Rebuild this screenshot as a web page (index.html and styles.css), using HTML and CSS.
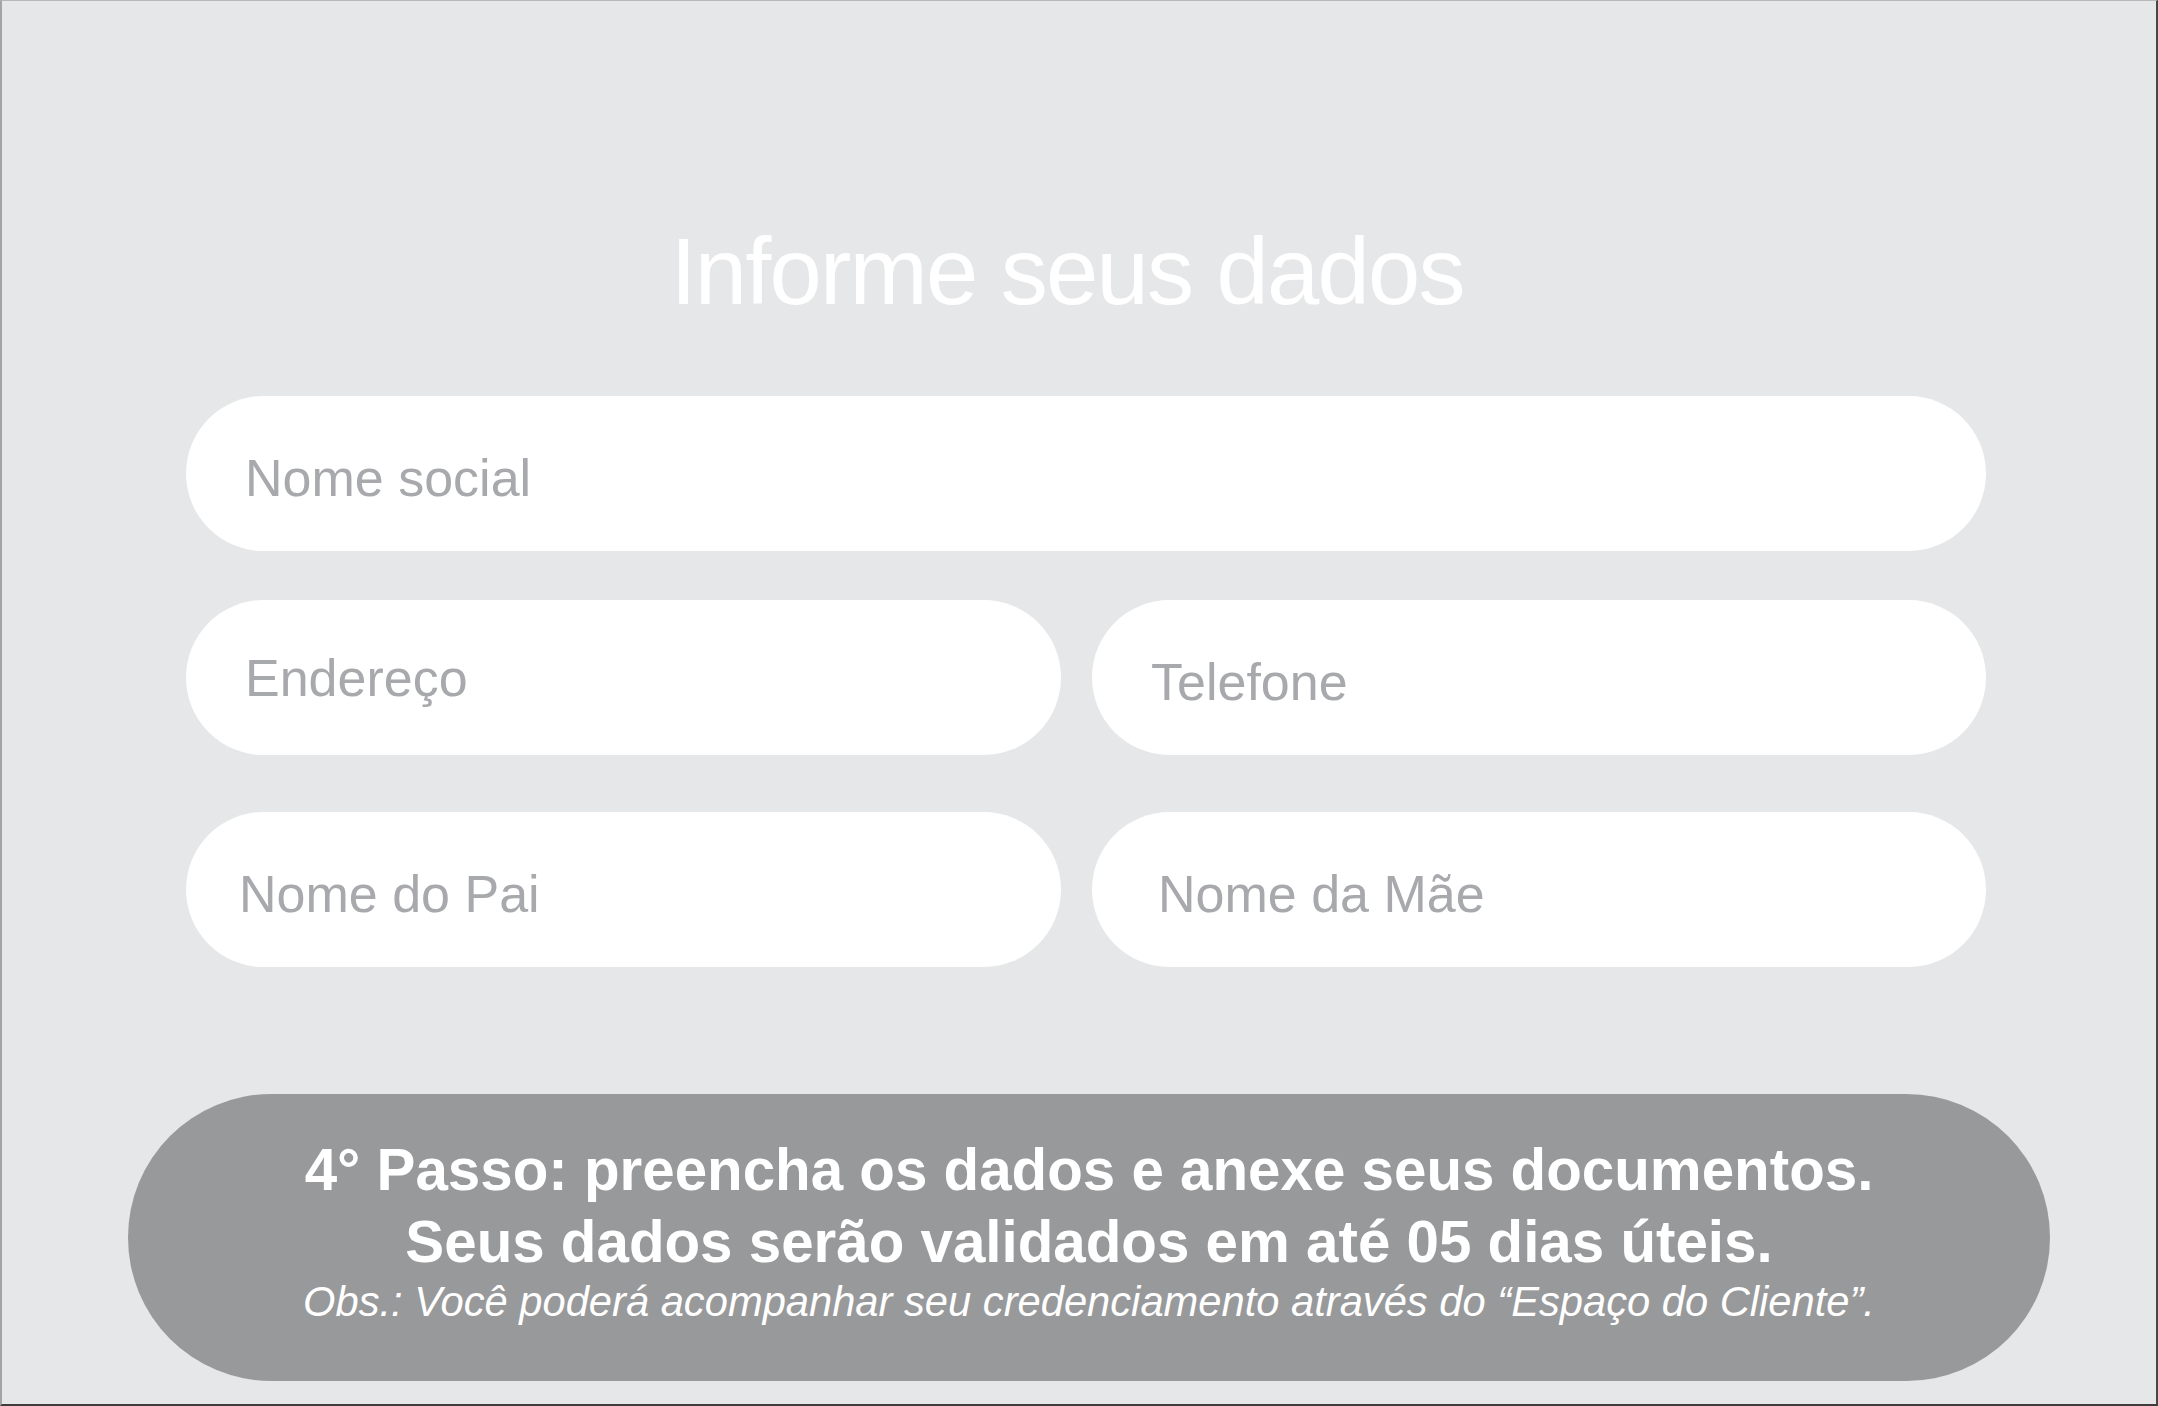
FILE: index.html
```html
<!DOCTYPE html>
<html lang="pt-BR">
<head>
    <meta charset="UTF-8">
    <meta name="viewport" content="width=device-width, initial-scale=1.0">
    <title>Informe seus dados</title>
    <link rel="stylesheet" href="styles.css">
</head>
<body>

<div class="frame">
    <h1 class="title">Informe seus dados</h1>

    <form class="data-form" id="dataForm">
        <input type="text" class="field field-wide" id="socialName" placeholder="Nome social">
        <input type="text" class="field field-address" id="address" placeholder="Endereço">
        <input type="tel" class="field" id="phone" placeholder="Telefone">
        <input type="text" class="field field-low field-pai" id="fatherName" placeholder="Nome do Pai">
        <input type="text" class="field field-low field-mae" id="motherName" placeholder="Nome da Mãe">
    </form>

    <div class="step-banner">
        <p class="step-line">4° Passo: preencha os dados e anexe seus documentos.</p>
        <p class="step-line">Seus dados serão validados em até 05 dias úteis.</p>
        <p class="step-note">Obs.: Você poderá acompanhar seu credenciamento através do “Espaço do Cliente”.</p>
    </div>
</div>

</body>
</html>
```

FILE: styles.css
```css
* {
    box-sizing: border-box;
}
body {
    font-family: "Liberation Sans", Arial, sans-serif;
    margin: 0;
    padding: 0;
    background-color: #e6e7e8;
}
.frame {
    width: 2158px;
    height: 1406px;
    padding-top: 224px;
    background-color: #e6e7e8;
    border-top: 1px solid #b8b8b8;
    border-left: 2px solid #a4a4a4;
    border-right: 2px solid #474747;
    border-bottom: 2px solid #3c3c3c;
}
.title {
    margin: 0;
    padding-right: 24px;
    font-size: 94px;
    font-weight: normal;
    line-height: 94px;
    letter-spacing: -1.8px;
    text-align: center;
    color: #fff;
}
.data-form {
    display: grid;
    grid-template-columns: 875px 894px;
    column-gap: 31px;
    row-gap: 49px;
    margin: 77px 0 0 184px;
}
.field {
    height: 155px;
    padding: 9px 20px 0 59px;
    border: none;
    border-radius: 78px;
    background-color: #fff;
    font-family: "Liberation Sans", Arial, sans-serif;
    font-size: 52px;
    color: #6d6e71;
    outline: none;
}
.field::placeholder {
    color: #a7a9ac;
}
.field-wide {
    grid-column: 1 / 3;
}
.field-address {
    padding-top: 0;
}
.field-low {
    margin-top: 8px;
}
.field-pai {
    padding-left: 53px;
}
.field-mae {
    padding-left: 66px;
}
.step-banner {
    width: 1922px;
    height: 287px;
    margin: 127px 0 0 126px;
    padding-top: 40px;
    border-radius: 144px;
    background-color: #98999b;
    color: #fff;
    text-align: center;
}
.step-line {
    margin: 0;
    font-size: 58.3px;
    font-weight: bold;
    line-height: 72px;
}
.step-note {
    margin: 0;
    font-size: 41.7px;
    font-style: italic;
    line-height: 48px;
}
```
